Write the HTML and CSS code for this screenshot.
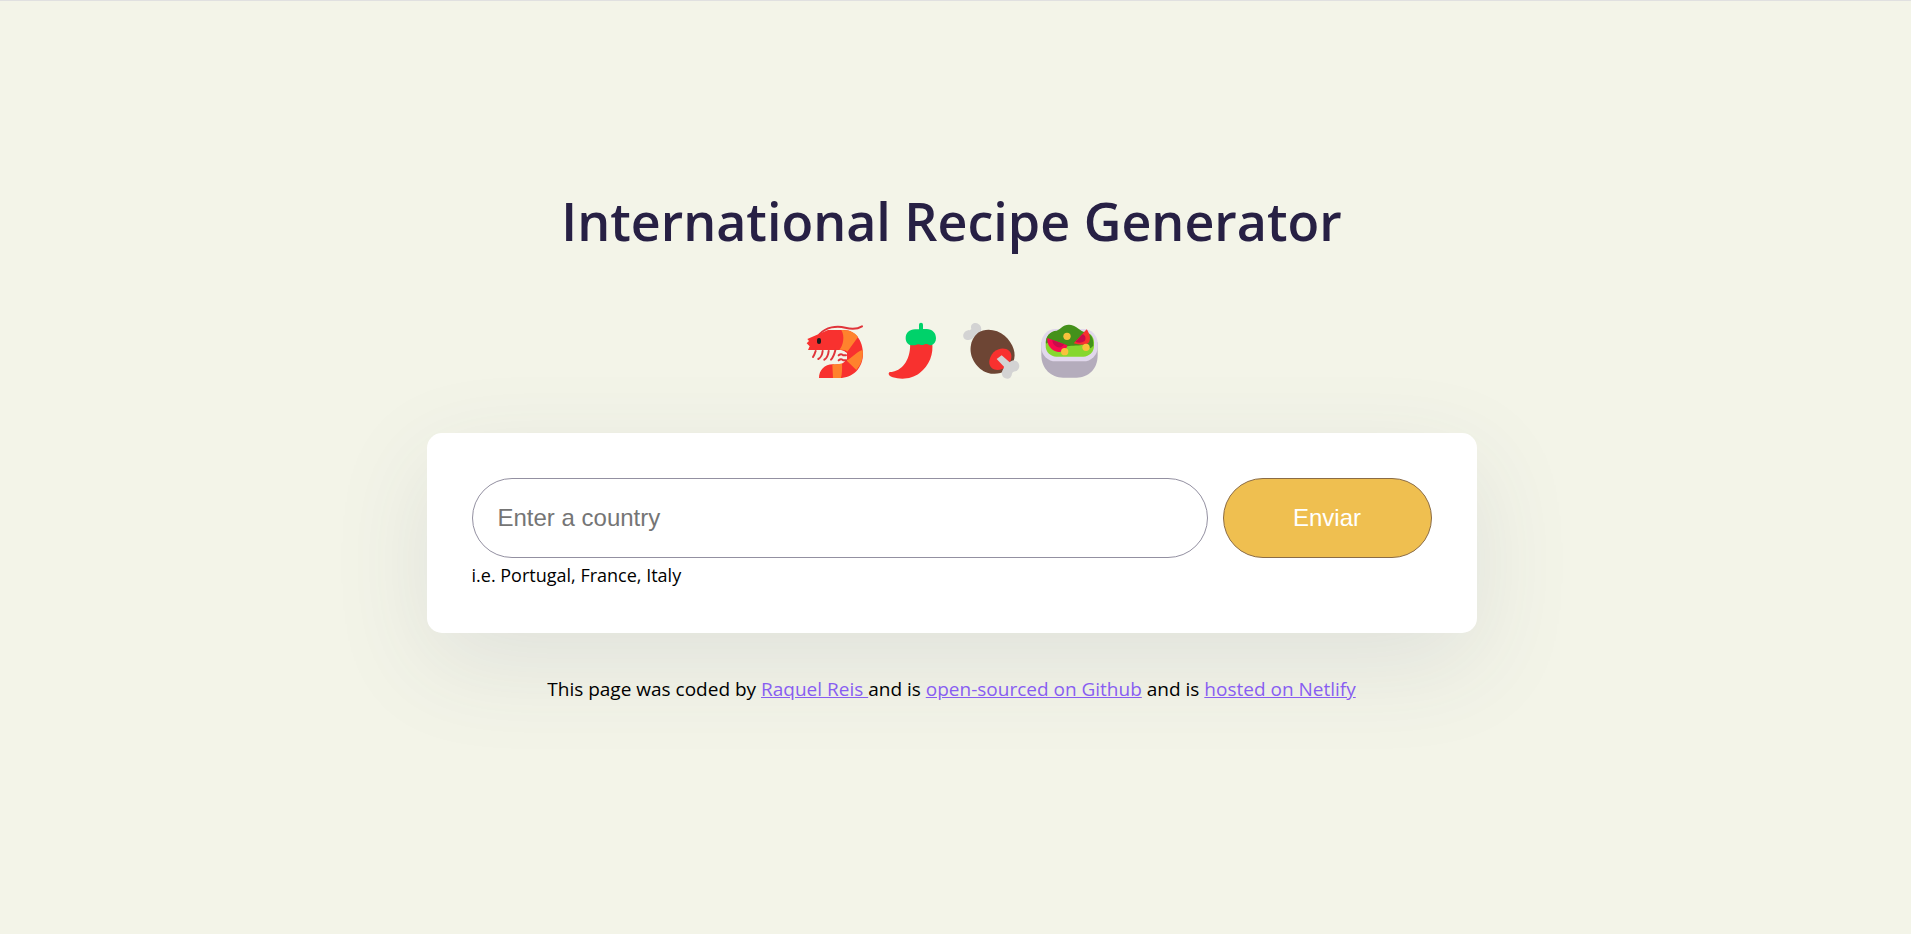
FILE: index.html
```html
<!DOCTYPE html>
<html lang="en">
<head>
<meta charset="utf-8">
<title>International Recipe Generator</title>
<link rel="stylesheet" href="styles.css">
</head>
<body>
<main class="container">
  <h1 class="title">International Recipe Generator</h1>
  <div class="emojis">
    <svg class="emoji" viewBox="15 15 180 180" role="img" aria-label="Shrimp">
      <path d="M58 58C78 36 110 31 136 38C155 43 171 43 186 34" fill="none" stroke="#e0343a" stroke-width="6" stroke-linecap="round"/>
      <path d="M22 72L84 45H132C166 45 189 78 189 116C189 158 160 189 118 189H57C57 166 74 148 98 148C124 150 141 139 141 125C141 112 132 105 118 105H24L29 94L20 85L27 78Z" fill="#f8312f"/>
      <path d="M124 45C150 44 168 55 174 66L142 110C136 104 127 104 118 104C130 92 135 63 124 45Z" fill="#ff822d"/>
      <path d="M188 105C191 129 182 150 169 165L139 136C157 130 168 110 188 105Z" fill="#ff822d"/>
      <path d="M97 148C111 149 119 147 126 144C127 160 126 177 123 189H99Z" fill="#ff822d"/>
      <path d="M47 108Q44 118 39 126M68 108Q66 126 55 132M86 108Q84 127 73 134M106 106Q101 126 93 134" fill="none" stroke="#e0343a" stroke-width="6" stroke-linecap="round"/>
      <path d="M111 111H122Q127 111 129 107L141 114V132L128 145Q113 149 105 141L111 136L106 127L113 122Z" fill="#f3f4e8"/>
      <path d="M116 121Q124 114 130 121H138M116 136Q124 129 130 136H138" fill="none" stroke="#e0343a" stroke-width="6" stroke-linecap="round"/>
      <rect x="51" y="69" width="12" height="18" rx="6" fill="#1c1c1c"/>
    </svg>
    <svg class="emoji" viewBox="9 15 180 180" role="img" aria-label="Hot pepper">
      <path d="M90 80H156C162 117 148 151 119 174C95 193 64 194 38 187C28 184 23 177 28 172C30 170 34 171 38 170C70 164 94 129 90 80Z" fill="#f8312f"/>
      <path d="M117 43V29Q117 23 123 23Q129 23 129 29V42H140C157 42 168 54 168 70C168 81 162 88 154 91C147 91 145 86 138 87C131 88 130 91 123 90C116 87 113 87 107 90C101 91 98 91 93 91C84 89 77 81 77 70C77 54 88 43 105 43Z" fill="#00d26a"/>
    </svg>
    <svg class="emoji" viewBox="17 15 180 180" role="img" aria-label="Meat on bone">
      <path d="M69 73L55 67C50 75 40 77 32 74C20 69 21 52 34 47C41 45 45 47 48 42C44 31 52 23 61 24C73 25 81 37 77 49L90 61Z" fill="#d3d3d3"/>
      <path d="M68 53C91 38 126 43 148 62C175 86 184 118 174 139C162 169 128 184 96 173C67 163 42 129 46 95C48 77 55 64 68 53Z" fill="#6d4534"/>
      <path d="M115 112C130 98 150 98 161 107C172 117 170 135 158 149C143 166 122 169 110 160C97 150 100 127 115 112Z" fill="#f8312f"/>
      <path d="M124 132L139 121L163 142C168 136 177 135 184 139C196 147 194 164 181 169C174 171 172 170 170 176C169 187 160 194 150 190C138 186 137 172 143 163C145 160 146 158 146 155Z" fill="#d3d3d3"/>
    </svg>
    <svg class="emoji" viewBox="26 15 180 180" role="img" aria-label="Green salad">
      <path d="M33 82H202V121C202 163 173 188 139 188H98C62 188 33 161 33 121Z" fill="#b4acbc"/>
      <rect x="33" y="42" width="169" height="97" rx="43" fill="#e1d8ec"/>
      <rect x="46" y="50" width="145" height="75" rx="32" fill="#86d72f"/>
      <path d="M47 86C45 65 58 48 79 47C91 42 97 30 115 29C131 28 144 42 160 51C181 54 191 67 189 92L181 100L157 89C139 93 119 90 106 95L63 77Z" fill="#44911b"/>
      <path d="M51 69L111 91C108 108 94 113 80 110C62 106 49 89 51 69Z" fill="#f70a4f"/>
      <path d="M66 75L101 88C95 98 87 99 79 95C71 91 66 84 66 75Z" fill="#ca0b4a"/>
      <path d="M169 43C178 55 183 75 174 84C165 92 145 89 130 85Z" fill="#f8312f"/>
      <path d="M156 58C165 59 169 72 162 79C155 84 144 84 135 80Z" fill="#ca0b4a"/>
      <circle cx="110" cy="64" r="11" fill="#f9c23c"/>
      <circle cx="167" cy="97" r="11" fill="#f9c23c"/>
      <circle cx="103" cy="110" r="11" fill="#f9c23c"/>
    </svg>
  </div>
  <form class="card">
    <div class="fields">
      <input class="country" type="text" placeholder="Enter a country" aria-label="Country" aria-describedby="hint">
      <button class="submit" type="button">Enviar</button>
    </div>
    <p class="hint" id="hint">i.e. Portugal, France, Italy</p>
  </form>
  <footer class="credits">This page was coded by <a href="#">Raquel Reis </a>and is <a href="#">open-sourced on Github</a> and is <a href="#">hosted on Netlify</a></footer>
</main>
</body>
</html>
```

FILE: styles.css
```css
* {
  box-sizing: border-box;
}

body {
  margin: 0;
  padding: 0 8px 0 0;
  min-height: 100vh;
  background: #f3f4e8;
  box-shadow: inset 0 1px #e0e0e0;
  font-family: "Trebuchet MS", "Open Sans", sans-serif;
  color: #000;
}

.container {
  max-width: 1050px;
  margin: 0 auto;
  padding-top: 184px;
}

.title {
  margin: 0 0 62px;
  font-size: 52px;
  line-height: 74px;
  font-weight: 600;
  text-align: center;
  color: #272044;
}

.emojis {
  display: flex;
  justify-content: center;
  gap: 18px;
  margin-bottom: 53px;
}

.emoji {
  width: 60px;
  height: 60px;
}

.card {
  padding: 45px;
  border-radius: 15px;
  background: #fff;
  box-shadow: 0 30px 100px rgba(60, 70, 110, 0.1);
}

.fields {
  display: flex;
  gap: 15px;
}

.country,
.submit {
  height: 80px;
  border-radius: 40px;
  font-family: Arial, "Liberation Sans", sans-serif;
  font-size: 24px;
}

.country {
  flex: 1;
  min-width: 0;
  padding: 0 25px;
  border: 1px solid #9390a1;
  background: #fff;
}

.country::placeholder {
  color: #757575;
}

.submit {
  width: 209px;
  border: 1px solid #8b6c46;
  background: #efbf50;
  color: #fff;
}

.hint {
  margin: 4px 0 0;
  font-size: 18px;
  line-height: 26px;
}

.credits {
  margin-top: 43px;
  font-size: 19px;
  line-height: 26px;
  text-align: center;
}

.credits a {
  color: #885df1;
}
```
